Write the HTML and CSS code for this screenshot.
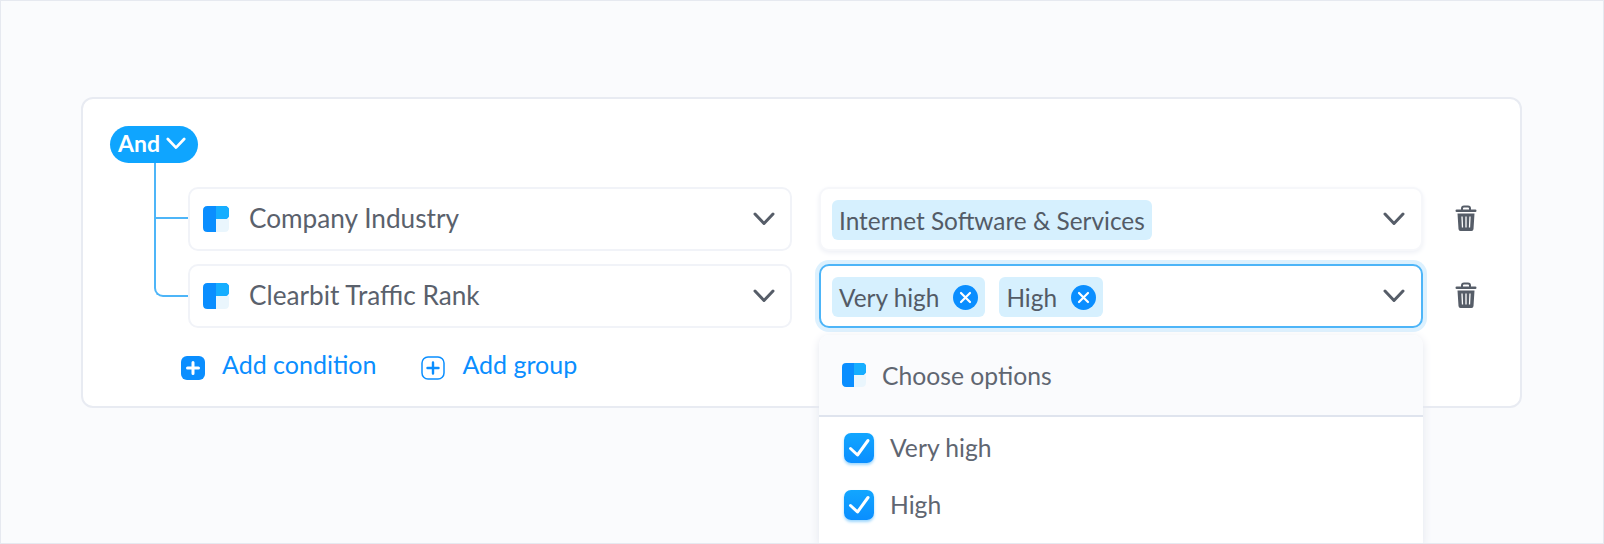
FILE: index.html
```html
<!doctype html>

<html>
<head>
	<title>Filter builder</title>
	<meta charset="utf-8">
	<link rel="stylesheet" href="styles.css">
</head>

<body>
	<svg class="defs" width="0" height="0">
		<symbol id="logo" viewBox="0 0 26 26">
			<path d="M12 0H21.500Q26 0 26 4.500V8.500Q26 13 21.500 13H13V26H4.500Q0 26 0 21.500V4.500Q0 0 4.500 0Z" fill="#0a8eff"/>
			<path d="M13 0H21.500Q26 0 26 4.500V8.500Q26 13 21.500 13H13Z" fill="#16aeff"/>
			<path d="M13 13H26V21.500Q26 26 21.500 26H13Z" fill="#eaf6fd"/>
		</symbol>
		<symbol id="chevron" viewBox="0 0 22 14">
			<path d="M2 2L11 11.500L20 2" fill="none" stroke="currentColor" stroke-width="3" stroke-linecap="round" stroke-linejoin="round"/>
		</symbol>
		<symbol id="trash" viewBox="0 0 22 26">
			<path d="M7 5V3.500Q7 1.500 9 1.500H13Q15 1.500 15 3.500V5" fill="none" stroke="#565d68" stroke-width="2"/>
			<rect x="0.500" y="4.500" width="21" height="2.500" rx="1.200" fill="#565d68"/>
			<path d="M2.500 8.500H19.500L18.500 24Q18.400 26 16.500 26H5.500Q3.600 26 3.500 24Z" fill="#565d68"/>
			<path d="M7 11.500L7.500 22.500M11 11.500V22.500M15 11.500L14.500 22.500" stroke="#fff" stroke-width="1.300"/>
		</symbol>
		<symbol id="remove" viewBox="0 0 25 25">
			<circle cx="12.500" cy="12.500" r="12.500" fill="#0a8eff"/>
			<path d="M8 8L17 17M17 8L8 17" stroke="#fff" stroke-width="2.200" stroke-linecap="round"/>
		</symbol>
		<symbol id="check" viewBox="0 0 30 30">
			<path d="M6.500 15.500L13.500 22L24 7.500" fill="none" stroke="#fff" stroke-width="3" stroke-linecap="round" stroke-linejoin="round"/>
		</symbol>
	</svg>

	<div class="card">
		<div class="operator">And <svg class="operatorArrow"><use href="#chevron"/></svg></div>

		<div class="rows">
			<div class="branch branchFirst"></div>
			<div class="branch branchLast"></div>

			<div class="row">
				<div class="field">
					<svg class="logo"><use href="#logo"/></svg>
					<span class="fieldName">Company Industry</span>
					<svg class="arrow"><use href="#chevron"/></svg>
				</div>
				<div class="field fieldValue">
					<span class="tag">Internet Software &amp; Services</span>
					<svg class="arrow"><use href="#chevron"/></svg>
				</div>
				<svg class="trash"><use href="#trash"/></svg>
			</div>

			<div class="row">
				<div class="field">
					<svg class="logo"><use href="#logo"/></svg>
					<span class="fieldName">Clearbit Traffic Rank</span>
					<svg class="arrow"><use href="#chevron"/></svg>
				</div>
				<div class="field fieldValue fieldOpen">
					<span class="tag">Very high <svg class="remove"><use href="#remove"/></svg></span>
					<span class="tag">High <svg class="remove"><use href="#remove"/></svg></span>
					<svg class="arrow"><use href="#chevron"/></svg>

					<div class="dropdown">
						<div class="dropdownHead">
							<svg class="logo logoSmall"><use href="#logo"/></svg>
							Choose options
						</div>
						<div class="option"><span class="checkbox"><svg><use href="#check"/></svg></span>Very high</div>
						<div class="option"><span class="checkbox"><svg><use href="#check"/></svg></span>High</div>
					</div>
				</div>
				<svg class="trash"><use href="#trash"/></svg>
			</div>
		</div>

		<div class="actions">
			<a href="#" class="action">
				<svg class="actionIcon" viewBox="0 0 24 24">
					<rect width="24" height="24" rx="6" fill="#0a8eff"/>
					<path d="M12 6.500V17.500M6.500 12H17.500" stroke="#fff" stroke-width="3" stroke-linecap="round"/>
				</svg>
				<span class="actionText">Add condition</span>
			</a>
			<a href="#" class="action">
				<svg class="actionIcon" viewBox="0 0 24 24">
					<rect x="1" y="1" width="22" height="22" rx="6" fill="none" stroke="#0a8eff" stroke-width="1.500"/>
					<path d="M12 6.500V17.500M6.500 12H17.500" stroke="#0a8eff" stroke-width="2.400" stroke-linecap="round"/>
				</svg>
				<span class="actionText">Add group</span>
			</a>
		</div>
	</div>
</body>
</html>
```

FILE: styles.css
```css
html, body { margin: 0px; padding: 0px }
body {
	box-sizing: border-box;
	width: 1604px;
	height: 544px;
	padding: 96px 80px 0;
	overflow: hidden;
	font-family: Lato, "Open Sans", sans-serif;
	color: #535b66;
	background-color: #fafbfd;
	border: 1px solid #e6e9f0;
}
.defs { position: absolute }

.card {
	box-sizing: border-box;
	width: 1441px;
	height: 311px;
	padding: 27px;
	background-color: #fff;
	border: 2px solid #e8ebf2;
	border-radius: 12px;
}

.operator {
	display: flex;
	align-items: center;
	gap: 6px;
	box-sizing: border-box;
	width: 88px;
	height: 37px;
	padding: 0 0 3px 8px;
	font-size: 23px;
	font-weight: 700;
	color: #fff;
	background-color: #0fa5ff;
	border-radius: 19px;
}
.operatorArrow { width: 20px; height: 13px }

.rows {
	position: relative;
	display: flex;
	flex-direction: column;
	gap: 13px;
	margin-top: 24px;
	padding-left: 78px;
}
.branch {
	position: absolute;
	left: 44px;
	width: 32px;
	border-left: 2px solid #4db5f8;
	border-bottom: 2px solid #4db5f8;
}
.branchFirst { top: -24px; height: 54px }
.branchLast { top: 31px; height: 77px; border-bottom-left-radius: 9px }

.row {
	display: flex;
	align-items: center;
	gap: 27px;
}
.field {
	position: relative;
	display: flex;
	align-items: center;
	box-sizing: border-box;
	width: 604px;
	height: 64px;
	padding: 0 15px 0 13px;
	background-color: #fff;
	border: 2px solid #f1f3f8;
	border-radius: 10px;
}
.fieldName {
	margin-left: 20px;
	padding-bottom: 3px;
	font-size: 26.200px;
	color: #5a616c;
}
.fieldValue {
	gap: 14px;
	padding-left: 11px;
	padding-right: 16px;
	border-color: #f6f7fa;
	box-shadow: 0 2px 5px #eef0f6;
}
.fieldOpen {
	border-color: #4db5f8;
	box-shadow: 0 0 0 4px #ddf1fe;
}
.logo { width: 26px; height: 26px }
.logoSmall { width: 24px; height: 24px }
.arrow {
	width: 22px;
	height: 14px;
	margin-left: auto;
	color: #565d68;
}
.trash {
	width: 22px;
	height: 26px;
	margin-bottom: 2px;
	margin-left: 5px;
}

.tag {
	display: flex;
	align-items: center;
	gap: 14px;
	height: 40px;
	margin-top: 2px;
	padding: 0 7px;
	font-size: 24.400px;
	background-color: #d6f0fe;
	border-radius: 6px;
}
.remove { width: 25px; height: 25px }

.dropdown {
	position: absolute;
	top: 69px;
	left: -2px;
	width: 604px;
	height: 208px;
	font-size: 24.700px;
	color: #5f6671;
	background-color: #fff;
	border-radius: 10px 10px 0 0;
	box-shadow: 0 2px 10px #e3e6ee;
}
.dropdownHead {
	display: flex;
	align-items: center;
	gap: 16px;
	box-sizing: border-box;
	height: 82px;
	padding-left: 23px;
	background-color: #fafbfd;
	border-bottom: 2px solid #dfe4ee;
	border-radius: 10px 10px 0 0;
}
.option {
	display: flex;
	align-items: center;
	gap: 16px;
	height: 57px;
	padding-left: 25px;
}
.dropdownHead + .option { margin-top: 2px }
.checkbox {
	display: block;
	width: 30px;
	height: 30px;
	background-image: linear-gradient(#12a6ff, #0a8eff);
	border-radius: 7px;
	box-shadow: 0 2px 3px #9ed7fd;
}
.checkbox svg { display: block; width: 30px; height: 30px }

.actions {
	display: flex;
	gap: 45px;
	margin-top: 21px;
	padding-left: 71px;
}
.action {
	display: flex;
	align-items: center;
	gap: 17px;
	font-size: 25px;
	color: #0a8eff;
	text-decoration: none;
}
.actionText { padding-bottom: 7px }
.actionIcon { width: 24px; height: 24px }
```
